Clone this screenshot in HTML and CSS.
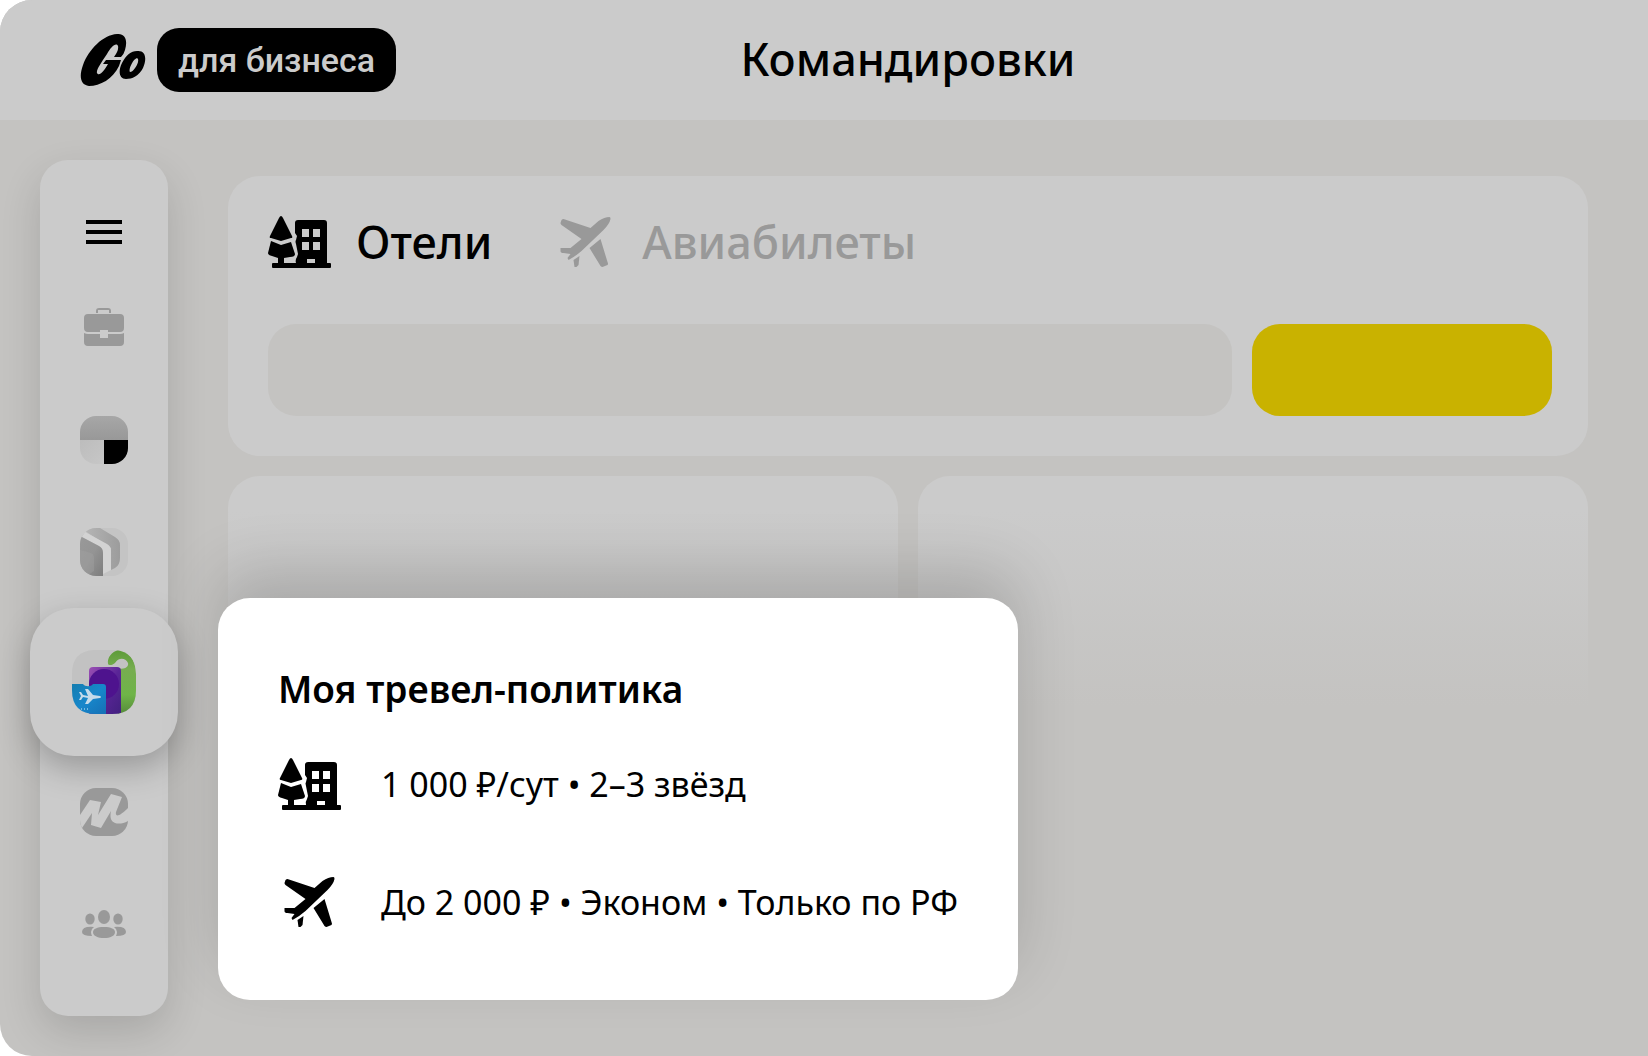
FILE: index.html
```html
<!DOCTYPE html>
<html lang="ru">
<head>
    <meta charset="UTF-8">
    <meta name="viewport" content="width=device-width, initial-scale=1.0">
    <title>Командировки</title>
    <link rel="stylesheet" href="styles.css">
</head>
<body>
    <!-- shared icons -->
    <svg class="sprite" aria-hidden="true">
        <symbol id="hotel" viewBox="0 0 63 52">
            <path d="M13 0Q14 0 15 2L24 20Q25 22 23 22L13 25L3 22Q1 22 2 20L11 2Q12 0 13 0Z"/>
            <path fill-rule="evenodd" d="M3 25L13 29L23 26L27 38Q27 41 22 41L16 42V47H28Q27 44 29 41L30 38L28 28Q27 25 28 24L29 20L27 17V7Q27 4 30 4H56Q59 4 59 7V47H62Q63 47 63 48V51Q63 52 62 52H5Q4 52 4 51V48Q4 47 5 47H10V42L4 40Q0 39 0 37ZM34 13V21H41V13ZM45 13V21H52V13ZM34 26V34H41V26ZM45 26V34H52V26ZM39 43V47H47V43Z"/>
        </symbol>
        <symbol id="plane" viewBox="0 0 50 50">
            <path d="M3 2L30 11L38 4Q44 0 49 0Q50 0 50 2Q49 7 43 13L21 34Q14 40 8 43L7 41L10 37L3 36Q0 36 0 34V31L10 31L21 22L1 8Q0 7 0 6L1 3Q2 2 3 2Z"/>
            <path d="M40 22L47 45Q48 47 47 48L42 50Q41 50 40 49L29 31Z"/>
            <path d="M13 43L19 39L18 48L16 50H14Z"/>
        </symbol>
    </svg>

    <div class="app">
        <header class="header">
            <a class="logo" href="#" aria-label="Go для бизнеса">
                <svg class="logo-go" viewBox="0 0 66 54">
                    <path d="M37 1C45 0 48 7 45 17Q44 21 41 24L34 24Q39 17 38 13C36 9 31 14 27 21C21 30 16 37 17 40C19 44 24 38 28 31H23L26 27H41L39 33C33 46 20 53 9 53C0 52-1 43 3 32C9 16 23 2 37 1Z"/>
                    <path fill-rule="evenodd" d="M57 18C66 17 67 26 63 35C59 43 52 46 46 46C39 46 38 38 42 30C46 22 51 18 57 18ZM57 25C53 26 48 37 50 39C54 39 61 27 57 25Z"/>
                </svg>
                <span class="logo-tag">для бизнеса</span>
            </a>
            <h1 class="title">Командировки</h1>
        </header>

        <div class="layout">
            <nav class="sidebar">
                <button class="side-btn" aria-label="Меню">
                    <svg width="36" height="24" viewBox="0 0 36 24"><path d="M0 0H36V4H0ZM0 10H36V14H0ZM0 20H36V24H0Z"/></svg>
                </button>
                <button class="side-btn case" aria-label="Портфель">
                    <svg width="40" height="38" viewBox="0 0 40 38" fill="#999">
                        <path d="M12 5V3Q12 0 15 0H24Q27 0 27 3V5H25V2H14V5Z"/>
                        <path d="M4 6H36Q40 6 40 10V20Q40 24 36 24H24V22H16V24H4Q0 24 0 20V10Q0 6 4 6Z"/>
                        <path d="M0 25Q2 26 4 26H16V30H24V26H36Q38 26 40 25V34Q40 38 36 38H4Q0 38 0 34Z"/>
                    </svg>
                </button>
                <button class="side-btn" aria-label="Доставка">
                    <svg width="48" height="48" viewBox="0 0 48 48">
                        <defs>
                            <linearGradient id="g1" x2="0" y2="1"><stop stop-color="#a7a7a7"/><stop offset="1" stop-color="#989898"/></linearGradient>
                            <linearGradient id="g2" x2="1" y2="1"><stop stop-color="#bcbcbc"/><stop offset="1" stop-color="#c7c7c7"/></linearGradient>
                            <clipPath id="tile"><rect width="48" height="48" rx="16"/></clipPath>
                        </defs>
                        <g clip-path="url(#tile)">
                            <path fill="url(#g1)" d="M0 0H48V24H0Z"/>
                            <path fill="url(#g2)" d="M0 24H24V48H0Z"/>
                            <path d="M24 24H48V48H24Z"/>
                        </g>
                    </svg>
                </button>
                <button class="side-btn" aria-label="Склад">
                    <svg width="48" height="48" viewBox="0 0 48 48">
                        <defs>
                            <linearGradient id="g3"><stop stop-color="#b5b5b5"/><stop offset="1" stop-color="#9c9c9c"/></linearGradient>
                            <linearGradient id="g4" x2="1" y2="1"><stop stop-color="#999"/><stop offset=".5" stop-color="#949494"/><stop offset="1" stop-color="#7d7d7d"/></linearGradient>
                        </defs>
                        <g clip-path="url(#tile)">
                            <path fill="#c4c4c4" d="M0 0H48V48H0Z"/>
                            <path fill="url(#g3)" d="M8 0H20L35 9Q40 12 40 17V30Q40 37 35 40L31 42V20L5 3Z"/>
                            <path fill="#d3d3d3" d="M5 4L27 16Q31 18 31 23V42L23 46V24Q23 20 19 18L2 9Z"/>
                            <path fill="url(#g4)" d="M0 8L19 18Q23 20 23 25V48H0Z"/>
                            <path fill="#a3a3a3" d="M0 22L11 25Q14 26 14 30V43L8 47L0 40Z" opacity=".4"/>
                        </g>
                    </svg>
                </button>
                <button class="side-btn active" aria-label="Командировки">
                    <svg width="64" height="64" viewBox="0 0 64 64">
                        <defs>
                            <linearGradient id="green" x2="0" y2="1"><stop stop-color="#5c9b38"/><stop offset=".3" stop-color="#77ad50"/><stop offset=".7" stop-color="#6fb448"/><stop offset="1" stop-color="#568a3a"/></linearGradient>
                            <linearGradient id="violet" x2="1" y2="1"><stop stop-color="#9b50b4"/><stop offset=".5" stop-color="#5a2597"/><stop offset="1" stop-color="#40207d"/></linearGradient>
                            <linearGradient id="blue" x2="1" y2="1"><stop stop-color="#147daf"/><stop offset=".5" stop-color="#1787cb"/><stop offset="1" stop-color="#1670b5"/></linearGradient>
                            <clipPath id="trip"><path d="M22 0H43Q64 2 64 24V40Q64 64 40 64H24Q0 64 0 40V24Q0 1 22 0Z"/></clipPath>
                        </defs>
                        <g clip-path="url(#trip)">
                            <path fill="#c2c2c2" d="M0 0H64V64H0Z"/>
                            <path fill="url(#green)" d="M36 14C35 7 40 2 46 0C58 1 64 12 64 24V64H46V18C52 20 57 17 56 13C53 7 46 8 43 13C41 15 37 16 36 14Z"/>
                            <rect x="17" y="17" width="32" height="50" rx="4" fill="url(#violet)"/>
                            <circle cx="32" cy="34" r="15" fill="#4e138e"/>
                            <path fill="url(#blue)" d="M0 34H11C13 37 19 37 21 34H31Q34 34 34 37V64H0Z"/>
                            <path fill="#c4dbea" d="M13 39H16L21 45L28 46Q30 47 28 48L21 49L16 54H13L16 48L11 47L9 50H7L9 46L7 42H9L11 45L16 46Z"/>
                            <path fill="#70b9df" d="M9 58H10V60H9ZM12 58H13V60H12ZM15 58H16V60H15Z"/>
                        </g>
                    </svg>
                </button>
                <button class="side-btn market" aria-label="Маркет">
                    <svg width="48" height="48" viewBox="0 0 48 48">
                        <g clip-path="url(#tile)">
                            <path fill="#999" d="M0 0H48V48H0Z"/>
                            <path fill="#cbcbcb" d="M0 27L10 12L21 14L18 27L31 6L42 9L36 24C35 30 40 28 48 20V33C43 36 38 36 35 35C30 33 30 28 31 23L21 40L11 37L12 25L2 40L-2 37Z"/>
                        </g>
                    </svg>
                </button>
                <button class="side-btn people" aria-label="Сотрудники">
                    <svg width="44" height="28" viewBox="0 0 44 28" fill="#999">
                        <ellipse cx="22" cy="7" rx="6" ry="7"/>
                        <ellipse cx="8" cy="9" rx="4.7" ry="5.5"/>
                        <ellipse cx="36" cy="9" rx="4.7" ry="5.5"/>
                        <path d="M22 17C29 17 33 19 33 22C33 26 28 28 22 28S11 26 11 22C11 19 15 17 22 17Z"/>
                        <path d="M12 17Q9 19 9 22Q9 24 10 26Q0 26 0 22Q0 16 12 17ZM32 17Q35 19 35 22Q35 24 34 26Q44 26 44 22Q44 16 32 17Z"/>
                    </svg>
                </button>
            </nav>

            <main class="content">
                <section class="search-card">
                    <div class="tabs">
                        <button class="tab tab-active"><svg class="icon"><use href="#hotel"/></svg>Отели</button>
                        <button class="tab"><svg class="icon icon-plane"><use href="#plane"/></svg>Авиабилеты</button>
                    </div>
                    <form class="search">
                        <input class="search-input" type="text" aria-label="Поиск">
                        <button class="search-btn" type="button" aria-label="Найти"></button>
                    </form>
                </section>
                <div class="cards">
                    <div class="card"></div>
                    <div class="card"></div>
                </div>
            </main>
        </div>

        <section class="policy">
            <h2 class="policy-title">Моя тревел-политика</h2>
            <ul class="policy-list">
                <li><svg class="icon"><use href="#hotel"/></svg>1 000 ₽/сут • 2–3 звёзд</li>
                <li><svg class="icon icon-plane"><use href="#plane"/></svg>До 2 000 ₽ • Эконом • Только по РФ</li>
            </ul>
        </section>
    </div>
</body>
</html>
```
FILE: styles.css
```css
*{
    padding: 0;
    margin: 0;
    box-sizing: border-box;
}
body{
    background: #fff;
    color: #000;
    font-family: "Noto Sans", "Open Sans", sans-serif;
}
button{
    border: none;
    background: none;
    font: inherit;
    color: inherit;
    cursor: pointer;
}
svg{
    display: block;
}
.sprite{
    position: absolute;
    width: 0;
    height: 0;
}
.app{
    position: relative;
    display: flex;
    flex-direction: column;
    min-height: 100vh;
    overflow: hidden;
    background: #c4c3c1;
    border-radius: 32px 0 0 32px;
}

/* header */
.header{
    display: grid;
    grid-template-columns: 148px 1fr;
    align-items: center;
    height: 120px;
    padding: 0 60px 0 80px;
    background: #cbcbcb;
}
.logo{
    display: flex;
    align-items: center;
    gap: 11px;
    color: #000;
    text-decoration: none;
    white-space: nowrap;
}
.logo-go{
    flex: none;
    width: 66px;
    height: 54px;
}
.logo-tag{
    height: 64px;
    padding: 0 21px;
    border-radius: 22px;
    background: #000;
    color: #cbcbcb;
    font-family: Roboto, "Noto Sans", sans-serif;
    font-size: 34px;
    font-weight: 500;
    line-height: 64px;
}
.title{
    padding-bottom: 2px;
    font-size: 45px;
    font-weight: 500;
    line-height: 60px;
    text-align: center;
}

/* sidebar */
.layout{
    display: flex;
    align-items: flex-start;
    gap: 60px;
    padding: 40px 60px 40px 40px;
}
.sidebar{
    display: flex;
    flex-direction: column;
    align-items: center;
    flex: none;
    width: 128px;
    padding: 60px 0 78px;
    border-radius: 28px;
    background: #cbcbcb;
    box-shadow: 0 16px 40px rgba(0, 0, 0, .14);
}
.side-btn{
    margin-bottom: 64px;
}
.case{
    margin-bottom: 70px;
}
.active{
    display: flex;
    align-items: center;
    justify-content: center;
    width: 148px;
    height: 148px;
    margin: -32px 0 32px;
    border-radius: 44px;
    background: #cbcbcb;
    box-shadow: 0 12px 32px rgba(0, 0, 0, .25);
}
.market{
    margin-bottom: 74px;
}
.people{
    margin-bottom: 0;
}

/* content */
.content{
    flex: 1;
    padding-top: 16px;
}
.search-card{
    padding: 32px 36px 40px 40px;
    border-radius: 32px;
    background: #cbcbcb;
}
.tabs{
    display: flex;
    gap: 62px;
    height: 68px;
    margin-bottom: 48px;
}
.tab{
    display: flex;
    align-items: center;
    gap: 25px;
    color: #999;
    font-size: 45px;
    font-weight: 500;
    line-height: 64px;
}
.tab-active{
    color: #000;
}
.icon{
    flex: none;
    width: 63px;
    height: 52px;
    fill: currentColor;
}
.icon-plane{
    height: 50px;
}
.search{
    display: flex;
    gap: 20px;
}
.search-input{
    flex: 1;
    height: 92px;
    padding: 0 28px;
    border: none;
    border-radius: 28px;
    background: #c4c3c1;
    font-size: 34px;
}
.search-btn{
    width: 300px;
    height: 92px;
    border-radius: 28px;
    background: #c9b200;
}
.cards{
    display: grid;
    grid-template-columns: 1fr 1fr;
    gap: 20px;
    margin-top: 20px;
}
.card{
    height: 230px;
    border-radius: 32px 32px 0 0;
    background: linear-gradient(#cbcbcb 15%, #c4c3c1);
}

/* travel policy popup */
.policy{
    position: absolute;
    left: 218px;
    bottom: 56px;
    width: 800px;
    padding: 62px 40px 58px 60px;
    border-radius: 32px;
    background: #fff;
    box-shadow: 0 -28px 60px rgba(0, 0, 0, .15);
}
.policy-title{
    margin-bottom: 26px;
    font-size: 37px;
    font-weight: 600;
    line-height: 58px;
}
.policy-list{
    list-style: none;
}
.policy-list li{
    display: flex;
    align-items: center;
    gap: 40px;
    height: 80px;
    font-size: 34px;
    white-space: nowrap;
}
.policy-list li + li{
    margin-top: 38px;
}
```
